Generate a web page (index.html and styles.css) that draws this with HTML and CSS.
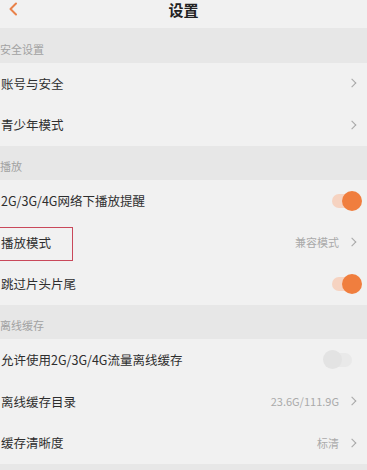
FILE: index.html
```html
<!DOCTYPE html>
<html lang="zh">
<head>
<meta charset="utf-8">
<link rel="stylesheet" href="styles.css">
</head>
<body>
<div class="page">
  <header class="topbar">
    <svg class="back" width="10" height="14" viewBox="0 0 10 14"><path d="M8 1.5 L2.5 7 L8 12.5" fill="none" stroke="#e9824a" stroke-width="2" stroke-linecap="round" stroke-linejoin="round"/></svg>
    <h1 class="title">设置</h1>
  </header>

  <div class="section">安全设置</div>
  <div class="row"><span class="label">账号与安全</span><span class="right"><span class="chev"></span></span></div>
  <div class="row"><span class="label">青少年模式</span><span class="right"><span class="chev"></span></span></div>

  <div class="section">播放</div>
  <div class="row"><span class="label">2G/3G/4G网络下播放提醒</span><span class="toggle on"><span class="knob"></span></span></div>
  <div class="row marked"><span class="label">播放模式</span><span class="right"><span class="value">兼容模式</span><span class="chev"></span></span><span class="mark"></span></div>
  <div class="row"><span class="label">跳过片头片尾</span><span class="toggle on"><span class="knob"></span></span></div>

  <div class="section">离线缓存</div>
  <div class="row"><span class="label">允许使用2G/3G/4G流量离线缓存</span><span class="toggle off"><span class="knob"></span></span></div>
  <div class="row"><span class="label">离线缓存目录</span><span class="right"><span class="value">23.6G/111.9G</span><span class="chev"></span></span></div>
  <div class="row"><span class="label">缓存清晰度</span><span class="right"><span class="value">标清</span><span class="chev"></span></span></div>
  <div class="section tail"></div>
</div>
</body>
</html>
```

FILE: styles.css
```css
* { box-sizing: border-box; }
html, body { margin: 0; padding: 0; }
body {
  background: #f1f1f1;
  font-family: "Noto Sans CJK SC", "Noto Sans", sans-serif;
  color: #333;
}
.page { width: 367px; height: 470px; overflow: hidden; }
.topbar {
  height: 28px;
  display: flex;
  align-items: flex-start;
  justify-content: center;
  padding-top: 0;
  position: relative;
}
.back { position: absolute; left: 8px; top: 2px; }
.title {
  margin: 0;
  font-size: 15px;
  font-weight: 700;
  color: #222;
  line-height: 19px;
}
.section {
  height: 34.5px;
  background: #e7e7e7;
  font-size: 11px;
  color: #a2a2a2;
  display: flex;
  align-items: center;
  padding-left: 0;
  padding-top: 7px;
}
.section.tail { height: 10px; }
.row {
  height: 41.5px;
  display: flex;
  align-items: center;
  justify-content: space-between;
  padding-left: 1px;
  padding-right: 10px;
  font-size: 12.5px;
  position: relative;
}
.label { color: #2e2e2e; }
.right { display: flex; align-items: center; gap: 10px; }
.value { font-size: 11px; color: #aaa; }
.chev {
  width: 6px; height: 6px;
  border-right: 1px solid #a8a8a8;
  border-top: 1px solid #a8a8a8;
  transform: rotate(45deg) scale(1.05, 1.05);
  margin-right: 2px;
}
.toggle { position: relative; width: 30px; height: 20px; display: block; }
.toggle.on { margin-right: -5px; }
.toggle.on::before {
  content: ""; position: absolute; left: 0; top: 3px;
  width: 24px; height: 14px; border-radius: 7px;
  background: #f6d3c1;
}
.toggle.on .knob {
  position: absolute; right: 0; top: 0;
  width: 20px; height: 20px; border-radius: 50%;
  background: #f07e3e;
}
.toggle.off { margin-right: 4px; }
.toggle.off::before {
  content: ""; position: absolute; left: 4px; top: 3px;
  width: 25px; height: 14px; border-radius: 7px;
  background: #e9e9e9;
}
.toggle.off .knob {
  position: absolute; left: 0; top: 0;
  width: 19px; height: 19px; border-radius: 50%;
  background: #e3e3e3;
}
.mark {
  position: absolute;
  left: -1px; top: 5px;
  width: 74px; height: 34px;
  border: 1.5px solid #c9485a;
}
```
